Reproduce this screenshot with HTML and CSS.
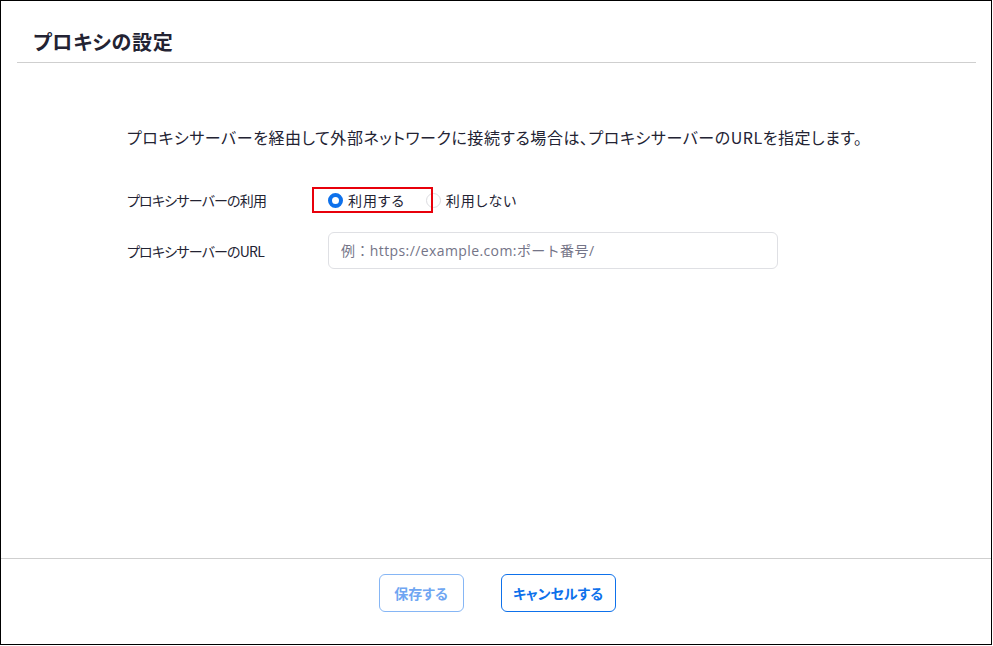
FILE: index.html
```html
<!DOCTYPE html>
<html lang="ja">
<head>
  <meta charset="UTF-8">
  <title>プロキシの設定</title>
  <link rel="stylesheet" href="styles.css">
</head>
<body>
  <div class="frame">
    <div class="header">
      <h2>プロキシの設定</h2>
    </div>

    <div class="content">
      <p class="lead">プロキシサーバーを経由して外部ネットワークに接続する場合は、プロキシサーバーのURLを指定します。</p>

      <div class="row">
        <div class="label">プロキシサーバーの利用</div>
        <div class="radios">
          <span class="mark"></span>
          <label class="radio"><span class="dot on"></span>利用する</label>
          <label class="radio"><span class="dot"></span>利用しない</label>
        </div>
      </div>

      <div class="row url-row">
        <div class="label">プロキシサーバーのURL</div>
        <input class="url" type="text" placeholder="例：https://example.com:ポート番号/">
      </div>
    </div>

    <div class="footer">
      <button class="btn save disabled">保存する</button>
      <button class="btn cancel">キャンセルする</button>
    </div>
  </div>
</body>
</html>
```

FILE: styles.css
```css
body { margin: 0; font-family: "Noto Sans CJK JP", "Noto Sans", sans-serif; color: #232333; font-feature-settings: "palt"; }
.frame { box-sizing: border-box; width: 992px; height: 645px; border: 1px solid #000; display: flex; flex-direction: column; background: #fff; }

.header { margin: 0 15px 0 16px; padding: 27px 16px 0; height: 34px; border-bottom: 1px solid #cfcfcf; }
.header h2 { margin: 0; font-size: 20px; line-height: 28px; font-weight: bold; letter-spacing: 0.7px; }

.content { flex: 1; padding: 62px 0 0 126px; }
.lead { margin: 0 0 38px; font-size: 16px; line-height: 24px; letter-spacing: 0.55px; }

.row { display: flex; align-items: center; font-size: 14px; }
.label { width: 201px; letter-spacing: -0.8px; }
.url-row { margin-top: 19px; }

.radios { position: relative; display: flex; align-items: center; height: 26px; }
.mark { position: absolute; left: -16px; top: 0; width: 117px; height: 22px; border: 2px solid #e8000b; }
.radio { display: flex; align-items: center; margin-right: 21px; letter-spacing: 0.9px; }
.dot { box-sizing: border-box; width: 15px; height: 15px; border-radius: 50%; border: 1px solid #dcdce0; margin-right: 5px; }
.dot.on { border: 4px solid #0e71eb; }

.url { box-sizing: border-box; width: 450px; height: 37px; border: 1px solid #dfe0e4; border-radius: 6px; padding: 0 12px; font: 14px "Open Sans", "Noto Sans CJK JP", sans-serif; letter-spacing: 0.4px; color: #232333; }
.url::placeholder { color: #747487; }

.footer { height: 86px; border-top: 1px solid #cfcfcf; display: flex; justify-content: center; align-items: flex-start; gap: 37px; padding: 15px 0 0 2px; box-sizing: border-box; }
.btn { box-sizing: border-box; height: 38px; padding: 0; border: 1px solid #0e71eb; border-radius: 6px; background: #fff; color: #0e71eb; font: bold 14px "Noto Sans CJK JP", sans-serif; font-feature-settings: "palt"; }
.save { width: 85px; }
.cancel { width: 115px; }
.btn.disabled { color: #6fa6f2; border-color: #86b6f5; }
```
